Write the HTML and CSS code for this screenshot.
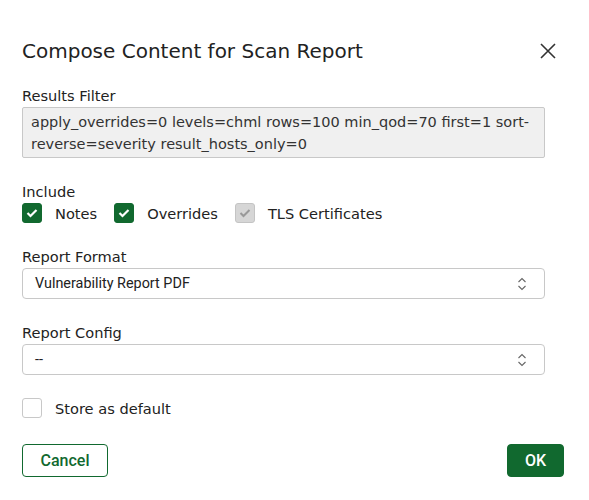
FILE: index.html
```html
<!DOCTYPE html>
<html lang="en">
<head>
    <meta charset="UTF-8">
    <title>Compose Content for Scan Report</title>
    <link rel="stylesheet" href="styles.css">
</head>
<body>
<div class="dialog">
    <div class="dialog-header">
        <h1>Compose Content for Scan Report</h1>
        <button class="close-button" title="Close">
            <svg width="16" height="16" viewBox="0 0 16 16">
                <path d="M1 1 L15 15 M15 1 L1 15" stroke="#333" stroke-width="1.6" fill="none"/>
            </svg>
        </button>
    </div>

    <div class="field">
        <label class="field-label">Results Filter</label>
        <div class="filter-box">apply_overrides=0 levels=chml rows=100 min_qod=70 first=1 sort-reverse=severity result_hosts_only=0</div>
    </div>

    <div class="field">
        <label class="field-label">Include</label>
        <div class="checkbox-row">
            <label class="checkbox">
                <span class="box checked">
                    <svg width="12" height="10" viewBox="0 0 12 10"><path d="M1.5 5 L4.5 8 L10.5 2" stroke="#fff" stroke-width="2.2" fill="none"/></svg>
                </span>
                Notes
            </label>
            <label class="checkbox">
                <span class="box checked">
                    <svg width="12" height="10" viewBox="0 0 12 10"><path d="M1.5 5 L4.5 8 L10.5 2" stroke="#fff" stroke-width="2.2" fill="none"/></svg>
                </span>
                Overrides
            </label>
            <label class="checkbox">
                <span class="box disabled">
                    <svg width="12" height="10" viewBox="0 0 12 10"><path d="M1.5 5 L4.5 8 L10.5 2" stroke="#999" stroke-width="2" fill="none"/></svg>
                </span>
                TLS Certificates
            </label>
        </div>
    </div>

    <div class="field">
        <label class="field-label">Report Format</label>
        <div class="select">
            <span>Vulnerability Report PDF</span>
            <svg width="10" height="14" viewBox="0 0 10 14"><path d="M1.5 5 L5 1.5 L8.5 5 M1.5 9 L5 12.5 L8.5 9" stroke="#666" stroke-width="1.1" fill="none"/></svg>
        </div>
    </div>

    <div class="field last">
        <label class="field-label">Report Config</label>
        <div class="select">
            <span>--</span>
            <svg width="10" height="14" viewBox="0 0 10 14"><path d="M1.5 5 L5 1.5 L8.5 5 M1.5 9 L5 12.5 L8.5 9" stroke="#666" stroke-width="1.1" fill="none"/></svg>
        </div>
    </div>

    <label class="checkbox">
        <span class="box"></span>
        Store as default
    </label>

    <div class="dialog-footer">
        <button class="btn btn-cancel">Cancel</button>
        <button class="btn btn-ok">OK</button>
    </div>
</div>
</body>
</html>
```

FILE: styles.css
```css
body {
    margin: 0;
    background-color: #fff;
    font-family: "DejaVu Sans", Verdana, sans-serif;
    color: #222;
}

.dialog {
    width: 542px;
    padding: 39px 0 0 22px;
    display: flex;
    flex-direction: column;
}

.dialog-header {
    display: flex;
    align-items: center;
    justify-content: space-between;
    width: 534px;
    margin-bottom: 24px;
}

h1 {
    margin: 0;
    font-size: 20px;
    font-weight: normal;
    color: #222;
}

.close-button {
    border: none;
    background: none;
    padding: 0;
    display: flex;
    cursor: pointer;
}

.field {
    display: flex;
    flex-direction: column;
    width: 523px;
    margin-bottom: 25px;
}

.field.last {
    margin-bottom: 23px;
}

.field-label {
    font-size: 14.6px;
    margin-bottom: 3px;
}

.filter-box {
    background-color: #f0f0f0;
    border: 1px solid #c8c8c8;
    border-radius: 2px;
    padding: 3px 8px 2px;
    font-size: 14.5px;
    line-height: 22px;
    color: #333;
}

.checkbox-row {
    display: flex;
    gap: 17px;
}

.checkbox {
    display: flex;
    align-items: center;
    gap: 13px;
    font-size: 14.6px;
    color: #222;
}

.box {
    width: 20px;
    height: 20px;
    box-sizing: border-box;
    border-radius: 3px;
    border: 1px solid #c8c8c8;
    display: flex;
    align-items: center;
    justify-content: center;
}

.box.checked {
    background-color: #11692f;
    border-color: #11692f;
}

.box.disabled {
    background-color: #d6d6d6;
    border-color: #c4c4c4;
}

.select {
    height: 31px;
    box-sizing: border-box;
    border: 1px solid #c8c8c8;
    border-radius: 4px;
    display: flex;
    align-items: center;
    justify-content: space-between;
    padding: 0 17px 0 12px;
    font-family: Roboto, sans-serif;
    font-size: 14.4px;
    color: #222;
}

.dialog-footer {
    display: flex;
    justify-content: space-between;
    width: 542px;
    margin-top: 26px;
}

.btn {
    height: 33px;
    box-sizing: border-box;
    border-radius: 4px;
    font-family: Roboto, sans-serif;
    font-size: 16px;
    font-weight: 500;
    cursor: pointer;
}

.btn-cancel {
    width: 86px;
    background-color: #fff;
    border: 1px solid #11692f;
    color: #11692f;
}

.btn-ok {
    width: 57px;
    background-color: #11692f;
    border: 1px solid #11692f;
    color: #fff;
}
```
